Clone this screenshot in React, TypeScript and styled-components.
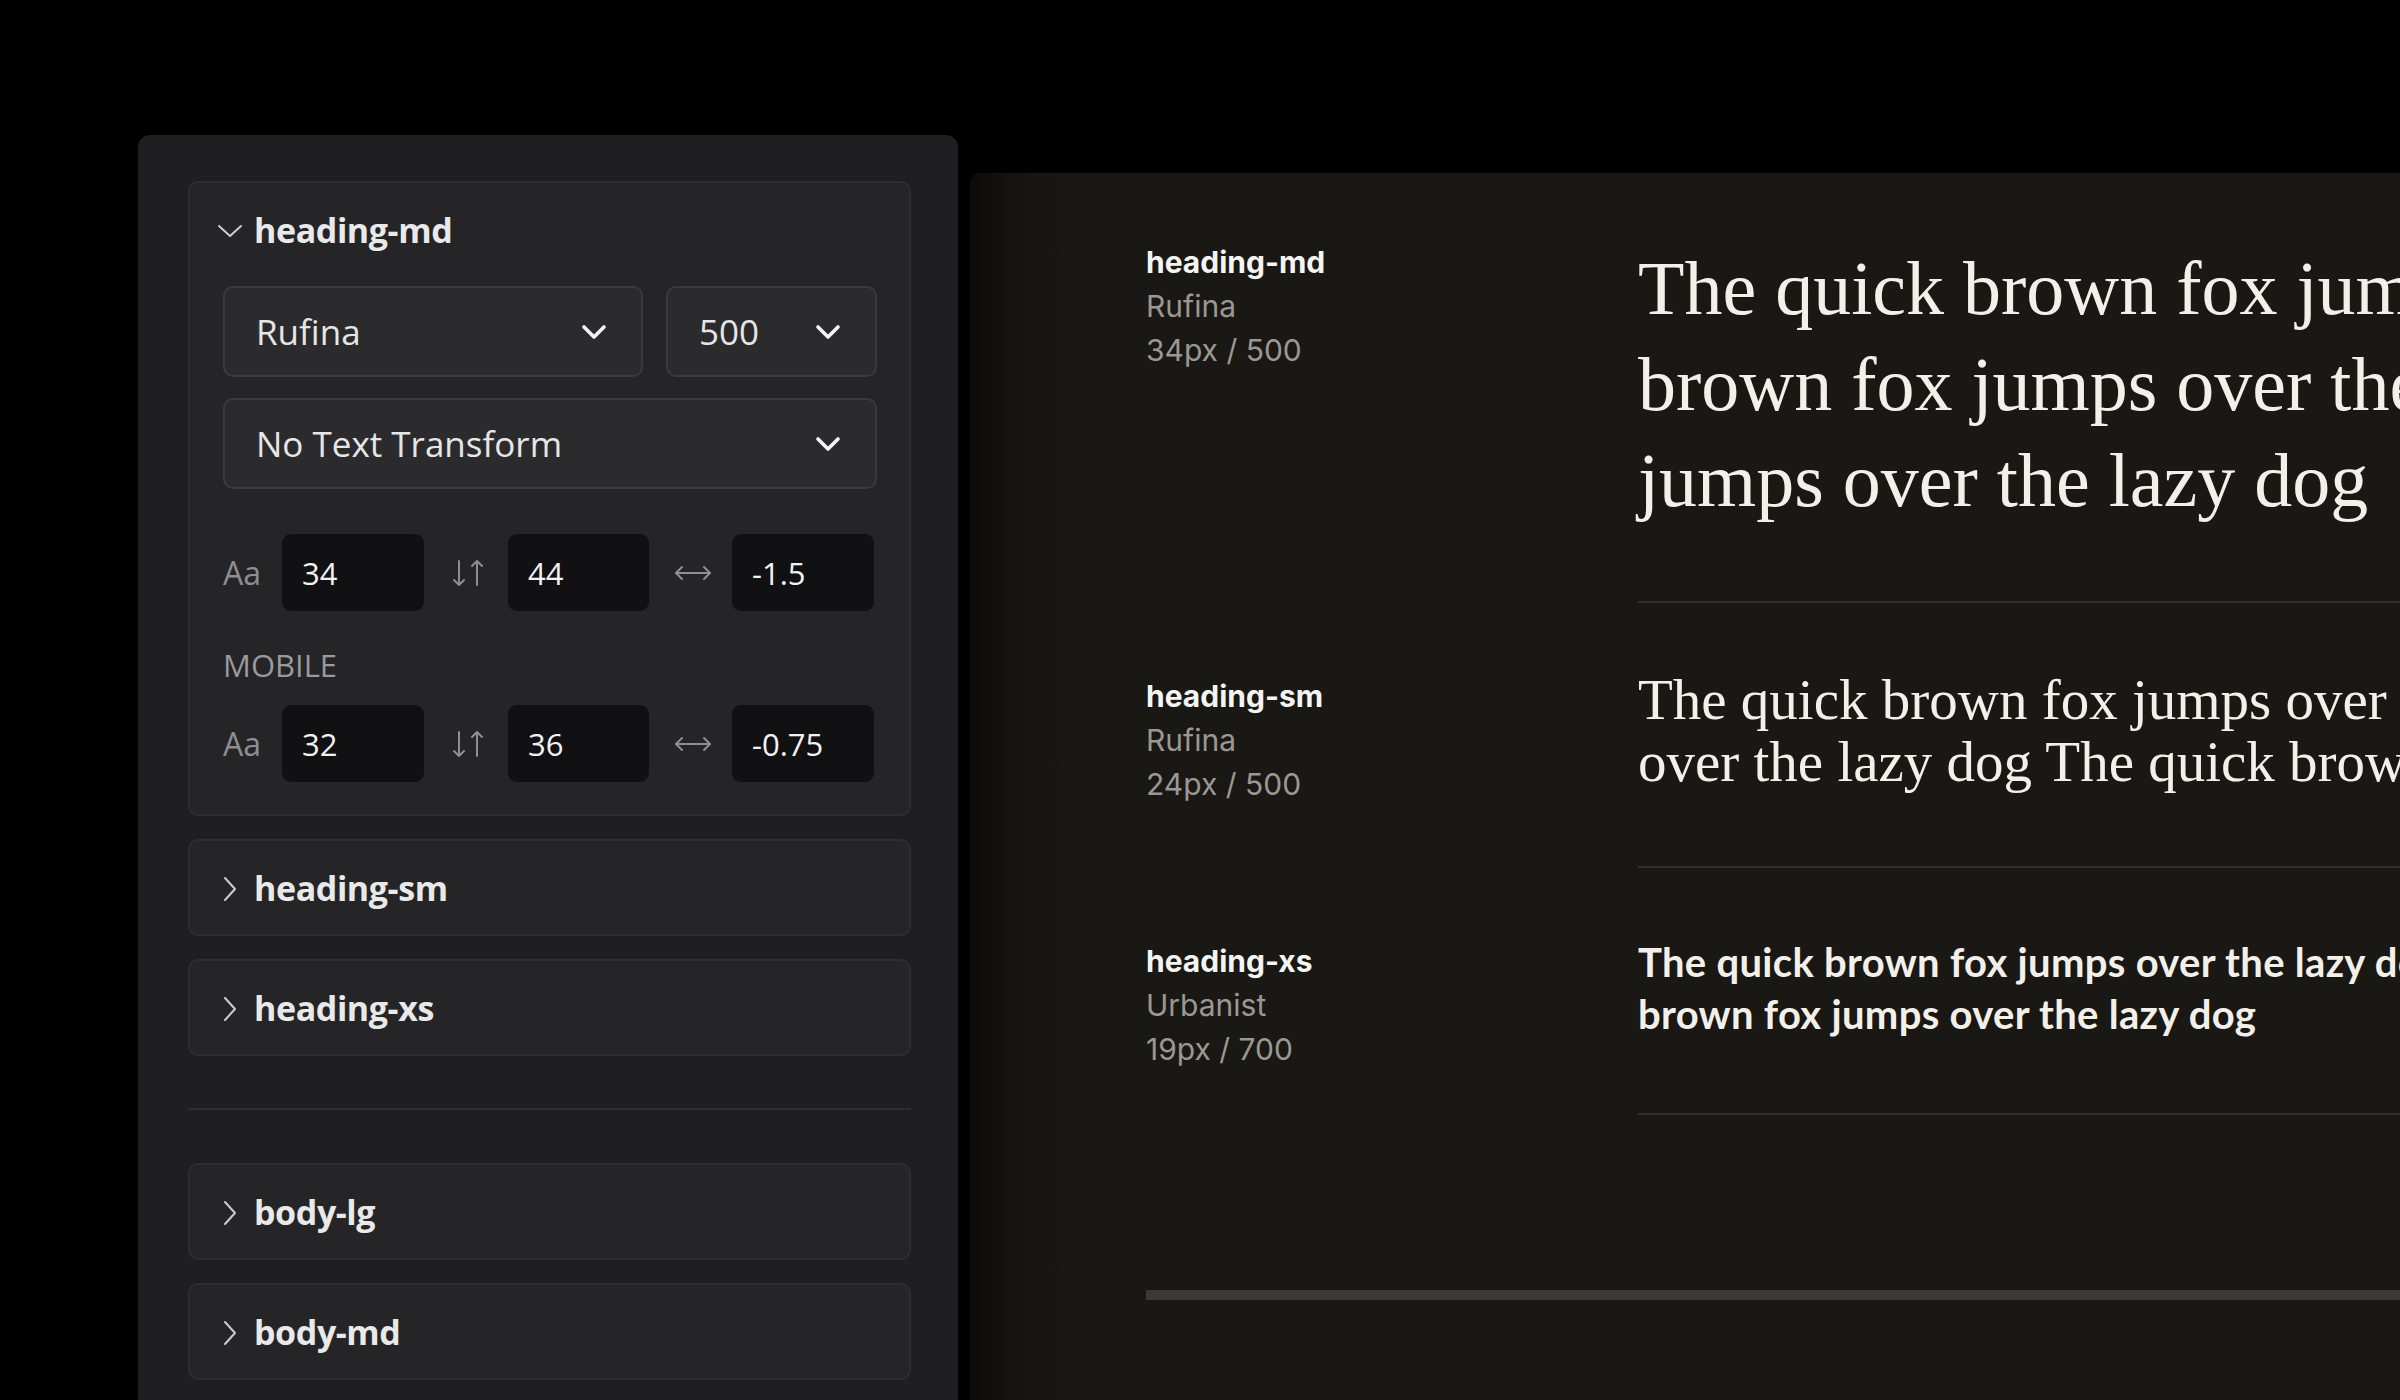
import React from "react"
import styled, { createGlobalStyle } from "styled-components"

const GlobalStyle = createGlobalStyle`
  html, body {
    margin: 0;
    padding: 0;
    background: #000;
  }
  body {
    width: 2400px;
    height: 1400px;
    overflow: hidden;
  }
  * {
    box-sizing: border-box;
  }
`

type Metric = { size: string; line: string; track: string }

const styles = [
  {
    name: "heading-md",
    font: "Rufina",
    weight: "500",
    open: true,
    desktop: { size: "34", line: "44", track: "-1.5" },
    mobile: { size: "32", line: "36", track: "-0.75" },
  },
  { name: "heading-sm" },
  { name: "heading-xs" },
]

const bodyStyles = ["body-lg", "body-md", "body-sm"]

const specimens = [
  {
    name: "heading-md",
    family: "Rufina",
    meta: "34px / 500",
    kind: "md",
    lines: [
      "The quick brown fox jumps over the lazy dog The quick",
      "brown fox jumps over the lazy dog The quick brown fox",
      "jumps over the lazy dog",
    ],
  },
  {
    name: "heading-sm",
    family: "Rufina",
    meta: "24px / 500",
    kind: "sm",
    lines: [
      "The quick brown fox jumps over the lazy dog The quick brown fox jumps",
      "over the lazy dog The quick brown fox jumps over the lazy dog",
    ],
  },
  {
    name: "heading-xs",
    family: "Urbanist",
    meta: "19px / 700",
    kind: "xs",
    lines: [
      "The quick brown fox jumps over the lazy dog The quick",
      "brown fox jumps over the lazy dog",
    ],
  },
]

function ChevronDown() {
  return (
    <svg width="26" height="14" viewBox="0 0 26 14" fill="none">
      <path d="M2 2 L13 12 L24 2" stroke="#cdcdcf" strokeWidth="2" strokeLinecap="round" strokeLinejoin="round" />
    </svg>
  )
}

function ChevronRight() {
  return (
    <svg width="14" height="26" viewBox="0 0 14 26" fill="none">
      <path d="M2 2 L12 13 L2 24" stroke="#cdcdcf" strokeWidth="2" strokeLinecap="round" strokeLinejoin="round" />
    </svg>
  )
}

function SelectChevron() {
  return (
    <svg width="26" height="16" viewBox="0 0 26 16" fill="none">
      <path d="M3 3 L13 13 L23 3" stroke="#f4f4f4" strokeWidth="3.6" strokeLinecap="round" strokeLinejoin="round" />
    </svg>
  )
}

function LineHeightIcon() {
  return (
    <svg width="32" height="28" viewBox="0 0 32 28" fill="none">
      <g stroke="#8f8f92" strokeWidth="2" strokeLinecap="round" strokeLinejoin="round">
        <path d="M7 2 V26 M2 21 L7 26 L12 21" />
        <path d="M25 26 V2 M20 7 L25 2 L30 7" />
      </g>
    </svg>
  )
}

function TrackingIcon() {
  return (
    <svg width="38" height="16" viewBox="0 0 38 16" fill="none">
      <g stroke="#8f8f92" strokeWidth="2" strokeLinecap="round" strokeLinejoin="round">
        <path d="M2 8 H36" />
        <path d="M8 2 L2 8 L8 14" />
        <path d="M30 2 L36 8 L30 14" />
      </g>
    </svg>
  )
}

function MetricFields({ m }: { m: Metric }) {
  return (
    <MetricRow>
      <MetricIcon $start>Aa</MetricIcon>
      <NumberField>{m.size}</NumberField>
      <MetricIcon>
        <LineHeightIcon />
      </MetricIcon>
      <NumberField>{m.line}</NumberField>
      <MetricIcon>
        <TrackingIcon />
      </MetricIcon>
      <NumberField>{m.track}</NumberField>
    </MetricRow>
  )
}

export default function App() {
  return (
    <>
      <GlobalStyle />
      <Stage>
        <Sidebar>
          {styles.map((s) =>
            s.open ? (
              <Card key={s.name} $open>
                <CardHeader>
                  <ChevronSlot>
                    <ChevronDown />
                  </ChevronSlot>
                  {s.name}
                </CardHeader>
                <CardBody>
                  <SelectRow>
                    <Select>
                      {s.font}
                      <SelectChevron />
                    </Select>
                    <Select>
                      {s.weight}
                      <SelectChevron />
                    </Select>
                  </SelectRow>
                  <Select>
                    No Text Transform
                    <SelectChevron />
                  </Select>
                  <Metrics>
                    <MetricFields m={s.desktop!} />
                    <SubLabel>MOBILE</SubLabel>
                    <MetricFields m={s.mobile!} />
                  </Metrics>
                </CardBody>
              </Card>
            ) : (
              <Card key={s.name}>
                <CardHeader>
                  <ChevronSlot>
                    <ChevronRight />
                  </ChevronSlot>
                  {s.name}
                </CardHeader>
              </Card>
            )
          )}
          <GroupDivider />
          {bodyStyles.map((name) => (
            <Card key={name}>
              <CardHeader>
                <ChevronSlot>
                  <ChevronRight />
                </ChevronSlot>
                {name}
              </CardHeader>
            </Card>
          ))}
        </Sidebar>

        <Preview>
          <SpecimenList>
            {specimens.map((sp) => {
              const Sample = sp.kind === "md" ? SampleMd : sp.kind === "sm" ? SampleSm : SampleXs
              return (
                <Specimen key={sp.name}>
                  <Meta>
                    <MetaName>{sp.name}</MetaName>
                    <MetaLine>{sp.family}</MetaLine>
                    <MetaLine>{sp.meta}</MetaLine>
                  </Meta>
                  <SampleCell>
                    <Sample>
                      {sp.lines.map((l, i) => (
                        <div key={i}>{l}</div>
                      ))}
                    </Sample>
                    <Rule />
                  </SampleCell>
                </Specimen>
              )
            })}
          </SpecimenList>
          <SectionBar />
        </Preview>
      </Stage>
    </>
  )
}

const Stage = styled.div`
  display: flex;
  align-items: flex-start;
  gap: 12px;
  width: 2400px;
  height: 1400px;
  padding-left: 138px;
  overflow: hidden;
  background: #000;
`

const Sidebar = styled.aside`
  flex: 0 0 820px;
  height: 1265px;
  margin-top: 135px;
  padding: 46px 47px 0 50px;
  background: #1f1f21;
  border-radius: 12px 12px 0 0;
  display: flex;
  flex-direction: column;
  gap: 23px;
  overflow: hidden;
  font-family: "Open Sans", "Noto Sans", sans-serif;
`

const Card = styled.section<{ $open?: boolean }>`
  flex: none;
  background: #252528;
  border: 2px solid #2e2e31;
  border-radius: 10px;
  padding: 0 32px ${(p) => (p.$open ? "32px" : "0")} 27px;
`

const CardHeader = styled.div`
  height: 93px;
  display: flex;
  align-items: center;
  gap: 11px;
  font-size: 34px;
  font-weight: 700;
  color: #e9e9ea;
  letter-spacing: -0.4px;
`

const ChevronSlot = styled.span`
  width: 26px;
  display: flex;
  justify-content: center;
  align-items: center;
  padding-top: 2px;
`

const CardBody = styled.div`
  padding: 10px 0 0 6px;
  display: flex;
  flex-direction: column;
  gap: 21px;
`

const SelectRow = styled.div`
  display: grid;
  grid-template-columns: 1fr 211px;
  gap: 23px;
`

const Select = styled.div`
  height: 91px;
  display: flex;
  align-items: center;
  justify-content: space-between;
  padding: 0 34px 0 31px;
  background: #2b2b2e;
  border: 2px solid #3a3a3d;
  border-radius: 10px;
  font-size: 35px;
  color: #e6e6e7;
`

const Metrics = styled.div`
  margin-top: 24px;
  display: flex;
  flex-direction: column;
`

const MetricRow = styled.div`
  display: grid;
  grid-template-columns: 59px 142px 84px 141px 83px 142px;
  align-items: center;
  height: 77px;
`

const MetricIcon = styled.div<{ $start?: boolean }>`
  display: flex;
  align-items: center;
  justify-content: ${(p) => (p.$start ? "flex-start" : "center")};
  padding-left: ${(p) => (p.$start ? "0" : "4px")};
  font-size: 32px;
  color: #8e8e91;
`

const NumberField = styled.div`
  height: 77px;
  display: flex;
  align-items: center;
  padding-left: 20px;
  background: #111113;
  border-radius: 9px;
  font-size: 31px;
  color: #f2f2f2;
`

const SubLabel = styled.div`
  height: 40px;
  line-height: 40px;
  margin: 34px 0 20px;
  font-size: 31px;
  color: #9a9a9d;
`

const GroupDivider = styled.hr`
  flex: none;
  width: 100%;
  height: 2px;
  margin: 29px 0 30px;
  border: 0;
  background: #2e2e31;
`

const Preview = styled.main`
  flex: 1;
  height: 1227px;
  margin-top: 173px;
  padding: 67px 0 0 176px;
  border-radius: 10px 0 0 0;
  background: linear-gradient(90deg, #0b0b0a 0px, #141310 38px, #1a1814 105px);
  overflow: hidden;
`

const SpecimenList = styled.div`
  display: flex;
  flex-direction: column;
  gap: 71px;
`

const Specimen = styled.div`
  display: grid;
  grid-template-columns: 492px 1fr;
  align-items: start;
`

const Meta = styled.div`
  font-family: Inter, "Noto Sans", sans-serif;
  font-size: 30px;
  line-height: 44px;
`

const MetaName = styled.div`
  font-weight: 700;
  color: #f4f4f2;
`

const MetaLine = styled.div`
  color: #9b9893;
`

const SampleCell = styled.div`
  min-width: 0;
`

const SampleBase = styled.div`
  white-space: nowrap;
  color: #f3f0ea;
`

const SampleMd = styled(SampleBase)`
  font-family: "Liberation Serif", "Times New Roman", serif;
  font-size: 76px;
  line-height: 96px;
`

const SampleSm = styled(SampleBase)`
  margin-top: -5px;
  font-family: "Liberation Serif", "Times New Roman", serif;
  font-size: 57px;
  line-height: 62px;
`

const SampleXs = styled(SampleBase)`
  margin-top: -3px;
  font-family: Lato, "Noto Sans", sans-serif;
  font-weight: 700;
  font-size: 40px;
  line-height: 52px;
  letter-spacing: 0.3px;
`

const Rule = styled.div`
  height: 2px;
  margin-top: 73px;
  background: #33312e;
`

const SectionBar = styled.div`
  height: 10px;
  margin-top: 175px;
  background: #3d3935;
`
